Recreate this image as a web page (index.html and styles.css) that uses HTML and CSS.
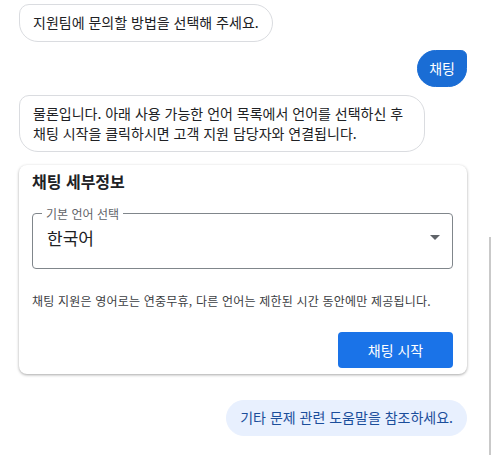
FILE: index.html
```html
<!DOCTYPE html>
<html lang="ko">
<head>
    <meta charset="UTF-8">
    <meta name="viewport" content="width=device-width, initial-scale=1.0">
    <title>고객 지원</title>
    <link rel="stylesheet" href="styles.css">
</head>
<body>

    <div class="chat">
        <div class="msg msg-bot">지원팀에 문의할 방법을 선택해 주세요.</div>
        <div class="msg msg-user">채팅</div>
        <div class="msg msg-bot msg-wide">물론입니다. 아래 사용 가능한 언어 목록에서 언어를 선택하신 후 채팅 시작을 클릭하시면 고객 지원 담당자와 연결됩니다.</div>

        <div class="card">
            <h2>채팅 세부정보</h2>
            <fieldset class="select">
                <legend>기본 언어 선택</legend>
                <span class="select-value">한국어</span>
                <span class="caret"></span>
            </fieldset>
            <p class="hint">채팅 지원은 영어로는 연중무휴, 다른 언어는 제한된 시간 동안에만 제공됩니다.</p>
            <div class="actions">
                <button class="btn">채팅 시작</button>
            </div>
        </div>

        <div class="msg msg-link">기타 문제 관련 도움말을 참조하세요.</div>
    </div>
    <div class="scrollbar"></div>

</body>
</html>
```

FILE: styles.css
```css
body {
    margin: 0;
    font-family: "Noto Sans CJK KR", "Noto Sans", sans-serif;
    background: #fff;
    color: #202124;
}
.chat {
    display: flex;
    flex-direction: column;
    align-items: flex-start;
    padding: 4px 26px 0 19px;
}
.msg {
    font-size: 14px;
    line-height: 19.5px;
    padding: 8px 13px;
    border-radius: 10px 19px 19px 19px;
    border: 1px solid #dadce0;
    margin-bottom: 8px;
    box-sizing: border-box;
}
.msg-wide {
    max-width: 406px;
}
.msg-user {
    align-self: flex-end;
    background: #1a6dd5;
    color: #fff;
    border-color: #1a6dd5;
    border-radius: 19px 6px 19px 19px;
    padding: 8px 11px;
}
.msg-link {
    align-self: flex-end;
    background: #e8f0fe;
    border-color: #e8f0fe;
    color: #1b4e9b;
    border-radius: 18px;
    padding: 7px 13px;
    margin-top: 26px;
}
.card {
    align-self: stretch;
    margin-top: 5px;
    border-radius: 8px;
    box-shadow: 0 1px 3px rgba(0, 0, 0, 0.35);
    padding: 4px 14px 6px 13px;
}
.card h2 {
    font-size: 16px;
    font-weight: 700;
    margin: 0 0 12px;
}
.select {
    margin: 0;
    border: 1px solid #80868b;
    border-radius: 4px;
    padding: 3px 14px 18px;
    display: flex;
    align-items: center;
    justify-content: space-between;
}
.select legend {
    font-size: 12px;
    color: #5f6368;
    padding: 0 4px;
    margin-left: -5px;
}
.select-value {
    font-size: 17px;
}
.caret {
    width: 0;
    height: 0;
    border-left: 5px solid transparent;
    border-right: 5px solid transparent;
    border-top: 5px solid #5f6368;
    margin-right: -2px;
}
.hint {
    font-size: 12px;
    letter-spacing: 0.2px;
    color: #3c4043;
    margin: 23px 0 23px;
}
.actions {
    display: flex;
    justify-content: flex-end;
}
.btn {
    font-family: inherit;
    font-size: 14px;
    background: #1a73e8;
    color: #fff;
    border: none;
    border-radius: 4px;
    width: 115px;
    height: 36px;
}
.scrollbar {
    position: absolute;
    left: 489px;
    top: 237px;
    width: 2px;
    height: 218px;
    background: #c9c9c9;
}
```
